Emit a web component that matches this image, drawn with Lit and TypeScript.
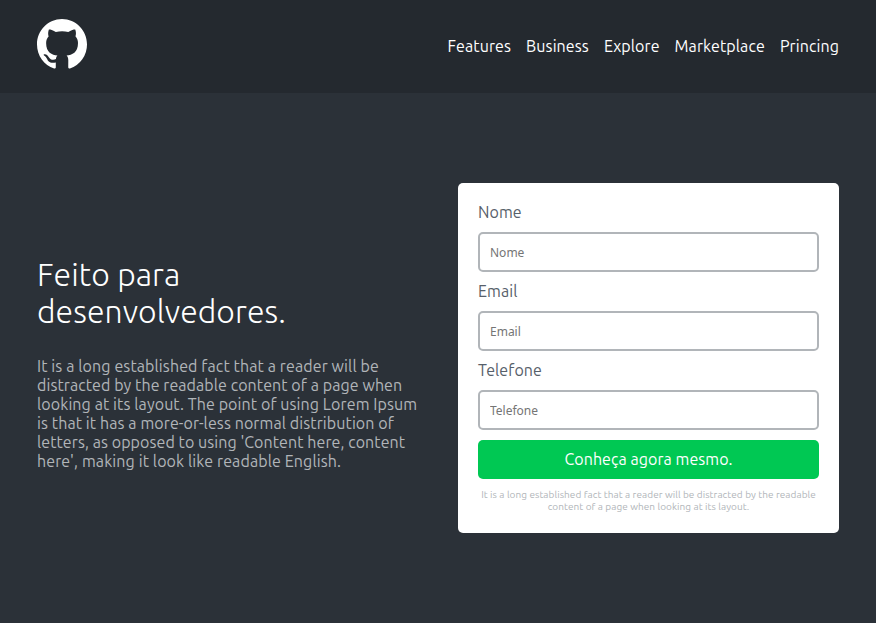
import { LitElement, html, css, svg } from "lit";
import { customElement, property } from "lit/decorators.js";
import { styleMap } from "lit/directives/style-map.js";

const NAV = ["Features", "Business", "Explore", "Marketplace", "Princing"];
const FIELDS = ["Nome", "Email", "Telefone"];
// Each line carries its own tracking, in pixels.
const INTRO: [string, number][] = [
  ["It is a long established fact that a reader will be", 0.108],
  ["distracted by the readable content of a page when", 0.075],
  ["looking at its layout. The point of using Lorem Ipsum", 0.096],
  ["is that it has a more-or-less normal distribution of", 0.096],
  ["letters, as opposed to using 'Content here, content", 0.075],
  ["here', making it look like readable English.", 0.112],
];

const mark = svg`<path fill-rule="evenodd" d="M8 0C3.58 0 0 3.58 0 8c0 3.54 2.29 6.53 5.47 7.59.4.07.55-.17.55-.38 0-.19-.01-.82-.01-1.49-2.01.37-2.53-.49-2.69-.94-.09-.23-.48-.94-.82-1.13-.28-.15-.68-.52-.01-.53.63-.01 1.08.58 1.23.82.72 1.21 1.87.87 2.33.66.07-.52.28-.87.51-1.07-1.78-.2-3.64-.89-3.64-3.95 0-.87.31-1.59.82-2.15-.08-.2-.36-1.02.08-2.12 0 0 .67-.21 2.2.82.64-.18 1.32-.27 2-.27s1.36.09 2 .27c1.53-1.04 2.2-.82 2.2-.82.44 1.1.16 1.92.08 2.12.51.56.82 1.27.82 2.15 0 3.07-1.87 3.75-3.65 3.95.29.25.54.73.54 1.48 0 1.07-.01 1.93-.01 2.2 0 .21.15.46.55.38A8.01 8.01 0 0 0 16 8c0-4.42-3.58-8-8-8z"/>`;

@customElement("form-field")
export class FormField extends LitElement {
  @property() label = "";
  static styles = css`
    :host { display: block; }
    label { display: block; height: 19px; line-height: 19px; font-size: 16px; color: #57606a; margin-bottom: 10px; letter-spacing: 0.07px; }
    input { display: block; width: 100%; height: 40px; box-sizing: border-box; border: 2px solid #b1b5b9; border-radius: 5px; padding: 0 10px; background: #fff; font: 12px "Noto Sans", sans-serif; outline: none; }
    input::placeholder { color: #757575; opacity: 1; }
  `;
  render() {
    return html`<label for="f">${this.label}</label><input id="f" placeholder=${this.label} />`;
  }
}

@customElement("app-root")
export class AppRoot extends LitElement {
  static styles = css`
    :host { display: block; height: 623px; background: #2b3138; font-family: "Ubuntu", "Noto Sans", sans-serif; }
    header { height: 93px; box-sizing: border-box; background: #24292f; padding: 0 37px; display: flex; align-items: center; justify-content: space-between; }
    .logo { width: 50px; height: 50px; fill: #fff; display: block; margin-bottom: 5px; }
    nav { display: flex; gap: 15px; }
    nav a { color: #fff; font-size: 16px; line-height: 19px; white-space: nowrap; letter-spacing: 0.1px; }
    main { height: 530px; display: flex; align-items: center; justify-content: space-between; padding: 0 37px; }
    .intro { width: 381px; margin-top: 10px; }
    h1 { margin: 0 0 27px; font-weight: 300; font-size: 32px; line-height: 37px; color: #fff; padding-top: 1px; letter-spacing: 0.07px; }
    h1 span, .text span { display: block; white-space: nowrap; }
    .text { margin: 0; font-size: 16px; line-height: 19px; color: #b1b5b9; }
    .card { width: 381px; height: 350px; box-sizing: border-box; background: #fff; border-radius: 5px; padding: 20px; display: flex; flex-direction: column; gap: 10px; }
    button { height: 39px; flex: none; border: 0; border-radius: 5px; background: #00c853; color: #fff; font: 16px "Ubuntu", "Noto Sans", sans-serif; letter-spacing: 0.06px; padding: 0 0 2px; }
    small { display: block; text-align: center; font-size: 10px; line-height: 12px; color: #b1b5b9; white-space: nowrap; letter-spacing: 0.06px; }
  `;
  render() {
    return html`
      <header>
        <svg class="logo" viewBox="0 0 16 15.75" preserveAspectRatio="none">${mark}</svg>
        <nav>${NAV.map((n) => html`<a>${n}</a>`)}</nav>
      </header>
      <main>
        <section class="intro">
          <h1><span>Feito para</span><span>desenvolvedores.</span></h1>
          <p class="text">${INTRO.map(([line, tracking]) => html`<span style=${styleMap({ letterSpacing: `${tracking}px` })}>${line}</span>`)}</p>
        </section>
        <form class="card">
          ${FIELDS.map((f) => html`<form-field label=${f}></form-field>`)}
          <button type="button">Conheça agora mesmo.</button>
          <small>It is a long established fact that a reader will be distracted by the readable<br />content of a page when looking at its layout.</small>
        </form>
      </main>
    `;
  }
}
